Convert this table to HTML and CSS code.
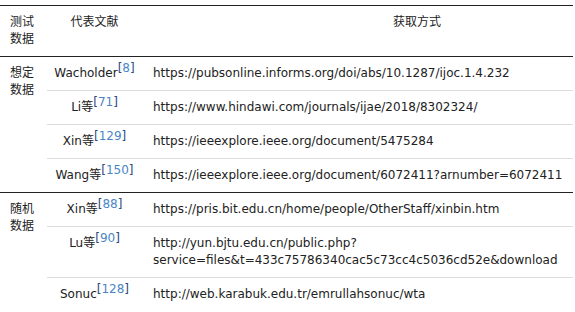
FILE: index.html
```html
<!DOCTYPE html>
<html lang="zh">
<head>
<meta charset="utf-8">
<link rel="stylesheet" href="styles.css">
</head>
<body>
<table class="data">
  <colgroup>
    <col class="c-kind">
    <col class="c-ref">
    <col class="c-url">
  </colgroup>
  <thead>
    <tr>
      <th class="kind">测试<br>数据</th>
      <th class="ref">代表文献</th>
      <th class="url-head">获取方式</th>
    </tr>
  </thead>
  <tbody class="group">
    <tr>
      <td class="kind" rowspan="4">想定<br>数据</td>
      <td class="ref">Wacholder<sup class="cite">[<span>8</span>]</sup></td>
      <td class="url">https://pubsonline.informs.org/doi/abs/10.1287/ijoc.1.4.232</td>
    </tr>
    <tr>
      <td class="ref">Li等<sup class="cite">[<span>71</span>]</sup></td>
      <td class="url">https://www.hindawi.com/journals/ijae/2018/8302324/</td>
    </tr>
    <tr>
      <td class="ref">Xin等<sup class="cite">[<span>129</span>]</sup></td>
      <td class="url">https://ieeexplore.ieee.org/document/5475284</td>
    </tr>
    <tr>
      <td class="ref">Wang等<sup class="cite">[<span>150</span>]</sup></td>
      <td class="url">https://ieeexplore.ieee.org/document/6072411?arnumber=6072411</td>
    </tr>
  </tbody>
  <tbody class="group">
    <tr>
      <td class="kind" rowspan="3">随机<br>数据</td>
      <td class="ref">Xin等<sup class="cite">[<span>88</span>]</sup></td>
      <td class="url">https://pris.bit.edu.cn/home/people/OtherStaff/xinbin.htm</td>
    </tr>
    <tr>
      <td class="ref">Lu等<sup class="cite">[<span>90</span>]</sup></td>
      <td class="url">http://yun.bjtu.edu.cn/public.php?<br>service=files&amp;t=433c75786340cac5c73cc4c5036cd52e&amp;download</td>
    </tr>
    <tr>
      <td class="ref">Sonuc<sup class="cite">[<span>128</span>]</sup></td>
      <td class="url">http://web.karabuk.edu.tr/emrullahsonuc/wta</td>
    </tr>
  </tbody>
</table>
</body>
</html>
```
FILE: styles.css
```css
html, body {
  margin: 0;
  padding: 0;
  background: #fff;
}
body {
  font-family: "DejaVu Sans", "Noto Sans CJK SC", sans-serif;
  font-size: 12px;
  line-height: 17px;
  color: #222;
}
.data {
  margin-top: 5px;
  width: 573px;
  border-collapse: collapse;
  table-layout: fixed;
  border-top: 1px solid #222;
}
.c-kind { width: 47px; }
.c-ref { width: 95px; }
.c-url { width: 431px; }

th, td {
  vertical-align: top;
  padding: 8px 0 8px 0;
  font-weight: normal;
  white-space: nowrap;
}
thead th {
  border-bottom: 1px solid #222;
}
th.kind, td.kind {
  text-align: left;
  padding-left: 10px;
}
th.ref, td.ref {
  text-align: center;
}
th.url-head {
  text-align: left;
  padding-left: 251px;
}
td.url {
  text-align: left;
  padding-left: 11px;
}
tbody.group + tbody.group tr:first-child td {
  border-top: 1px solid #222;
}
tbody tr + tr td {
  border-top: 1px solid #dcdcdc;
}
tbody tr + tr td.kind {
  border-top: none;
}
.cite {
  font-size: 12px;
  line-height: 0;
  vertical-align: 5px;
  color: #2b4a7e;
}
.cite span {
  color: #4a86c5;
}
```
